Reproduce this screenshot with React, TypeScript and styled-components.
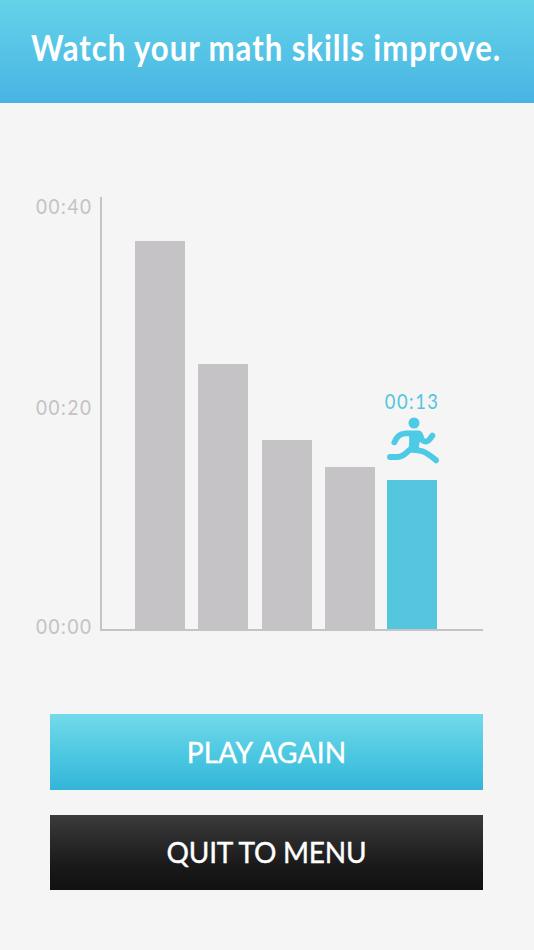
import React from "react";
import styled, { createGlobalStyle } from "styled-components";

const GlobalStyle = createGlobalStyle`
  * { box-sizing: border-box; }
  body { margin: 0; background: #f5f5f5; }
`;

const Screen = styled.div`
  display: flex;
  flex-direction: column;
  width: 534px;
  height: 950px;
  background: #f5f5f5;
  font-family: Lato, "Liberation Sans", sans-serif;
  overflow: hidden;
`;

const Header = styled.header`
  height: 103px;
  flex: none;
  padding: 25px 0 0 31px;
  background: linear-gradient(#64d3e8, #48b4e4);
`;

const Title = styled.h1`
  width: max-content;
  margin: 0;
  font-size: 36px;
  line-height: 44px;
  font-weight: 700;
  letter-spacing: 1.1px;
  word-spacing: 0;
  white-space: nowrap;
  color: #fff;
  transform: scaleX(0.865);
  transform-origin: left;
`;

const Chart = styled.section`
  display: flex;
  height: 434px;
  margin-top: 94px;
  padding-left: 36px;
`;

const Ticks = styled.div`
  display: grid;
  grid-template-rows: 201px 219px 24px;
  width: 63.5px;
  margin-top: -3.5px;
`;

const Time = styled.span<{ $active?: boolean }>`
  width: max-content;
  font-size: 21.5px;
  line-height: 24px;
  letter-spacing: 1.8px;
  white-space: nowrap;
  color: ${(p) => (p.$active ? "#53c5dd" : "#c4c2c4")};
  transform: scaleX(${(p) => (p.$active ? 0.85 : 0.88)});
  transform-origin: ${(p) => (p.$active ? "center" : "left")};
`;

const Plot = styled.div`
  display: grid;
  grid-template-columns: 63px 64px 63px 62px 50px;
  align-items: end;
  width: 383.5px;
  height: 433.5px;
  padding-left: 33.5px;
  border-left: 2px solid #c5c3c6;
  border-bottom: 2px solid #c5c3c6;
`;

const Column = styled.div`
  display: flex;
  flex-direction: column;
  align-items: center;
  width: 50px;
`;

const Bar = styled.div<{ $height: number; $active?: boolean }>`
  width: 50px;
  height: ${(p) => p.$height}px;
  background: ${(p) => (p.$active ? "#54c7df" : "#c5c3c6")};
`;

const RunnerIcon = styled.svg`
  width: 54px;
  height: 48px;
  margin: 4px 0 15px 2px;
  flex: none;
`;

const Actions = styled.div`
  display: grid;
  gap: 25px;
  margin: 83px 51px 0 50px;
`;

const Button = styled.button<{ $dark?: boolean }>`
  height: 75.5px;
  padding: 0;
  border: 0;
  color: #fff;
  font: 400 28px/34px Lato, "Liberation Sans", sans-serif;
  letter-spacing: ${(p) => (p.$dark ? "-0.2px" : "0.2px")};
  -webkit-text-stroke: 0.4px #fff;
  background: ${(p) =>
    p.$dark
      ? "linear-gradient(#3b3b3b, #191919 68%, #111)"
      : "linear-gradient(#73daea, #4bc7e1 55%, #34b5d8)"};
`;

function Runner() {
  return (
    <RunnerIcon viewBox="48 96 162 144" fill="none" stroke="#4dcae6" strokeWidth="17.5" strokeLinecap="round" strokeLinejoin="round">
      <circle cx="132" cy="114" r="16.5" fill="#4dcae6" stroke="none" />
      <path d="M73 172C81 154 89 146 107 145H144C153 145 151 155 155 162C160 172 172 172 179 163L187 152" />
      <path d="M114 139H149L155 158C148 169 147 181 146 194L115 197Q119 169 117 150Z" fill="#4dcae6" stroke="none" />
      <path d="M60 216H83C101 216 108 203 121 193C134 196 145 195 157 199C174 205 186 216 198 226" />
    </RunnerIcon>
  );
}

const results = [388, 264.5, 188.5, 162];

export default function App() {
  return (
    <>
      <GlobalStyle />
      <Screen>
        <Header>
          <Title>Watch your math skills improve.</Title>
        </Header>
        <Chart>
          <Ticks>
            <Time>00:40</Time>
            <Time>00:20</Time>
            <Time>00:00</Time>
          </Ticks>
          <Plot>
            {results.map((height) => (
              <Column key={height}>
                <Bar $height={height} />
              </Column>
            ))}
            <Column>
              <Time $active>00:13</Time>
              <Runner />
              <Bar $height={149} $active />
            </Column>
          </Plot>
        </Chart>
        <Actions>
          <Button>PLAY AGAIN</Button>
          <Button $dark>QUIT TO MENU</Button>
        </Actions>
      </Screen>
    </>
  );
}
